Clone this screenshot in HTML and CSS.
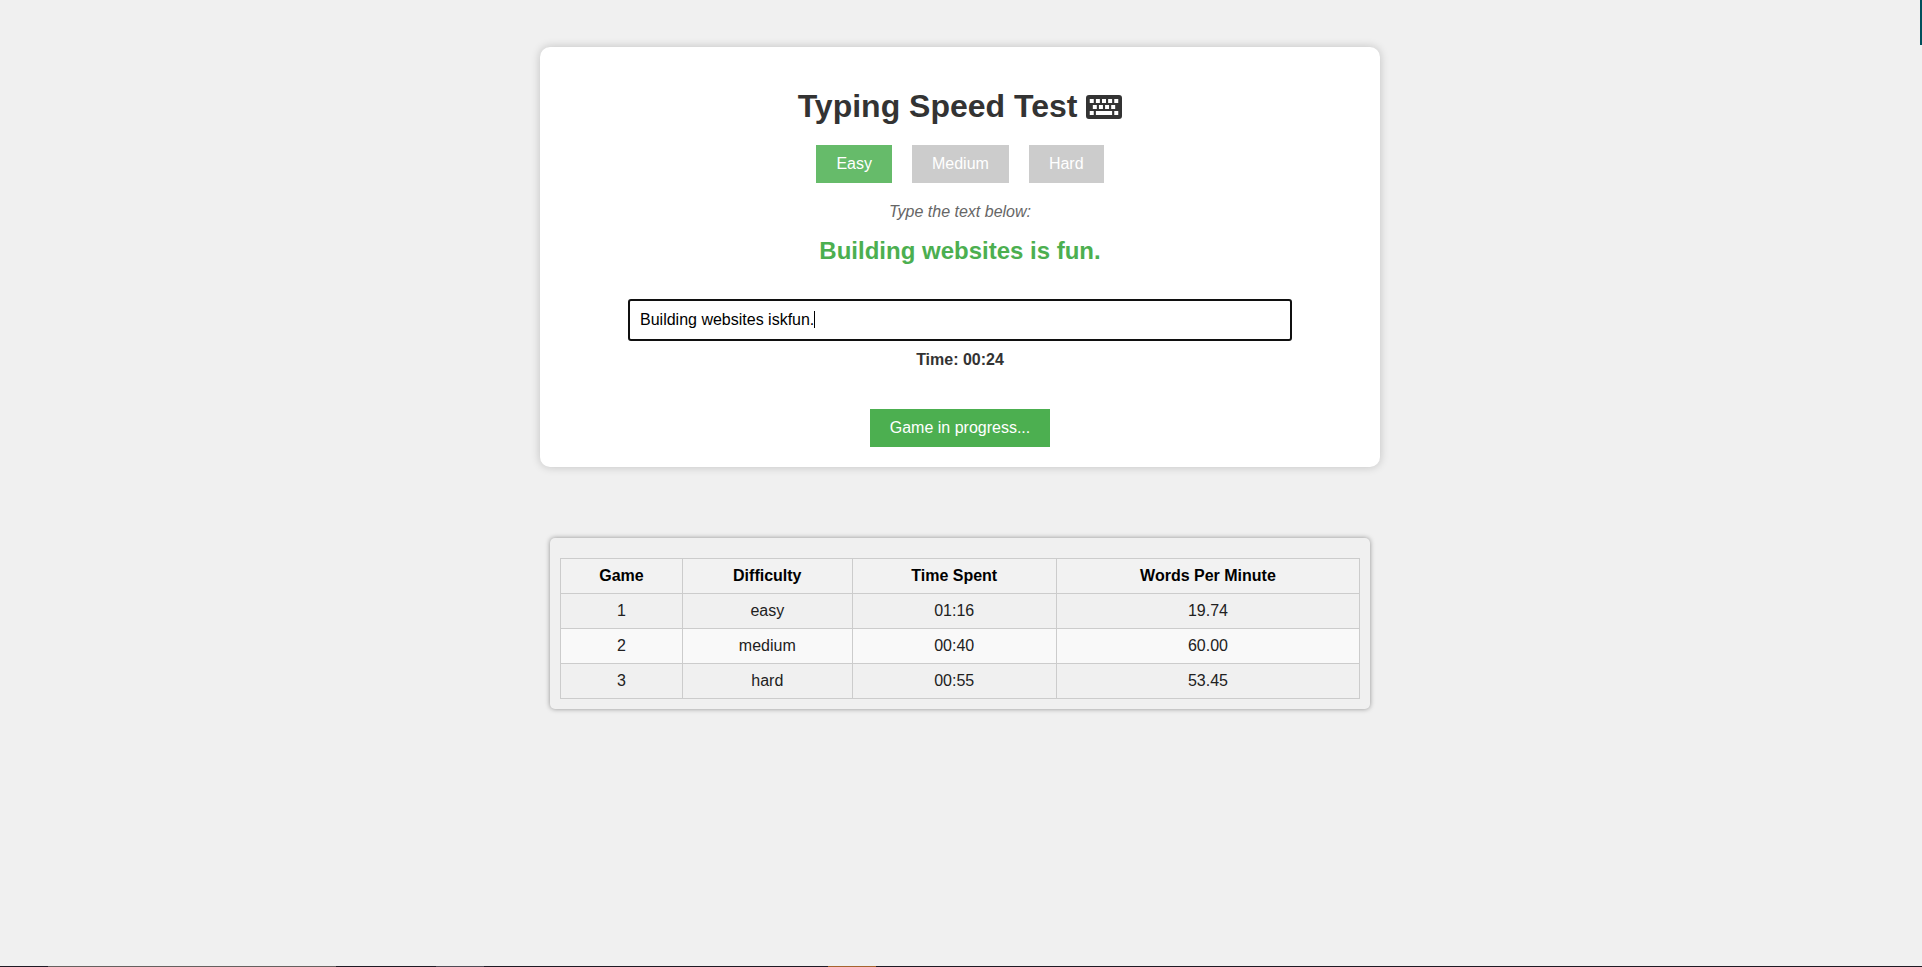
FILE: index.html
```
<!DOCTYPE html>
<html lang="en">
<head>
<meta charset="utf-8">
<title>Typing Speed Test</title>
<link rel="stylesheet" href="styles.css">
</head>
<body>
<div class="page">
  <main class="card">
    <h1 class="title">Typing Speed Test
      <svg class="title-icon" viewBox="0 0 576 384" aria-hidden="true">
        <path fill="currentColor" fill-rule="evenodd" d="M48 0H528a48 48 0 0 1 48 48V336a48 48 0 0 1-48 48H48a48 48 0 0 1-48-48V48A48 48 0 0 1 48 0ZM60 64V128H124V64ZM158 64V128H222V64ZM256 64V128H320V64ZM354 64V128H418V64ZM452 64V128H516V64ZM109 160V224H173V160ZM207 160V224H271V160ZM305 160V224H369V160ZM403 160V224H467V160ZM60 256V320H124V256ZM158 256V320H418V256ZM452 256V320H516V256Z"/>
      </svg>
    </h1>
    <div class="levels">
      <button class="btn level level-active" type="button">Easy</button>
      <button class="btn level" type="button">Medium</button>
      <button class="btn level" type="button">Hard</button>
    </div>
    <label class="hint" for="entry">Type the text below:</label>
    <p class="quote">Building websites is fun.</p>
    <div class="field">
      <input class="entry" id="entry" type="text" value="Building websites iskfun." autocomplete="off" spellcheck="false">
      <span class="caret"></span>
    </div>
    <p class="timer">Time: 00:24</p>
    <button class="btn start" type="button">Game in progress...</button>
  </main>
  <section class="results">
    <table class="scores">
      <thead>
        <tr><th>Game</th><th>Difficulty</th><th>Time Spent</th><th>Words Per Minute</th></tr>
      </thead>
      <tbody>
        <tr><td>1</td><td>easy</td><td>01:16</td><td>19.74</td></tr>
        <tr><td>2</td><td>medium</td><td>00:40</td><td>60.00</td></tr>
        <tr><td>3</td><td>hard</td><td>00:55</td><td>53.45</td></tr>
      </tbody>
    </table>
  </section>
</div>
<div class="bottom-edge"></div>
<div class="corner-edge"></div>
</body>
</html>
```
FILE: styles.css
```
* {
  box-sizing: border-box;
}

body {
  margin: 0;
  min-height: 100vh;
  display: flex;
  flex-direction: column;
  position: relative;
  background: #f0f0f0;
  color: #000;
  font: 16px/18px "Liberation Sans", Arial, sans-serif;
}

.page {
  flex: 1;
  display: flex;
  flex-direction: column;
  align-items: center;
  padding: 47px 2px 20px 0;
}

.card {
  width: 100%;
  max-width: 840px;
  display: flex;
  flex-direction: column;
  align-items: center;
  padding: 41px 20px 20px;
  border-radius: 10px;
  background: #fff;
  box-shadow: 0 0 10px rgba(0, 0, 0, 0.2);
}

.title {
  margin: 0 0 20px;
  color: #333;
  font-size: 32px;
  line-height: 37px;
}

.title-icon {
  width: 36px;
  height: 24px;
  vertical-align: -2px;
}

.levels {
  display: flex;
  gap: 20px;
  margin-bottom: 20px;
}

.btn {
  padding: 10px 20px;
  border: 0;
  color: #fff;
  font: inherit;
  cursor: pointer;
}

.level {
  background: #ccc;
}

.level-active {
  background: #66bb6a;
}

.hint {
  margin-bottom: 16px;
  color: #666;
  font-style: italic;
}

.quote {
  margin: 0 0 35px;
  color: #4caf50;
  font-size: 24px;
  font-weight: bold;
  line-height: 27px;
}

.field {
  position: relative;
  width: 83%;
  margin-bottom: 10px;
}

.entry {
  display: block;
  width: 100%;
  height: 42px;
  padding: 0 10px;
  border: 2px solid #101010;
  border-radius: 3px;
  outline: 0;
  background: #fff;
  color: #000;
  font: inherit;
}

.caret {
  position: absolute;
  top: 12px;
  left: 186px;
  width: 1px;
  height: 17px;
  background: #000;
}

.timer {
  margin: 0 0 40px;
  color: #333;
  font-weight: bold;
}

.start {
  background: #4caf50;
}

.results {
  width: 100%;
  max-width: 820px;
  margin-top: 71px;
  padding: 20px 10px 10px;
  border-radius: 5px;
  box-shadow: 0 0 5px rgba(0, 0, 0, 0.4);
}

.scores {
  width: 100%;
  border-collapse: collapse;
  text-align: center;
}

.scores th,
.scores td {
  padding: 8px;
  border: 1px solid #ccc;
}

.scores th {
  background: #f2f2f2;
}

.scores td {
  color: #212121;
}

.scores tbody tr:nth-child(even) {
  background: #f9f9f9;
}

.bottom-edge {
  height: 1px;
  background: linear-gradient(to right, #1f1a24 48px, #66605f 48px 336px, #1f1a24 336px 436px, #504b55 436px 484px, #1f1a24 484px 828px, #a5642f 828px 876px, #1f1a24 876px);
}

.corner-edge {
  position: absolute;
  top: 0;
  right: 0;
  width: 2px;
  height: 45px;
  background: #00505c;
}
```
